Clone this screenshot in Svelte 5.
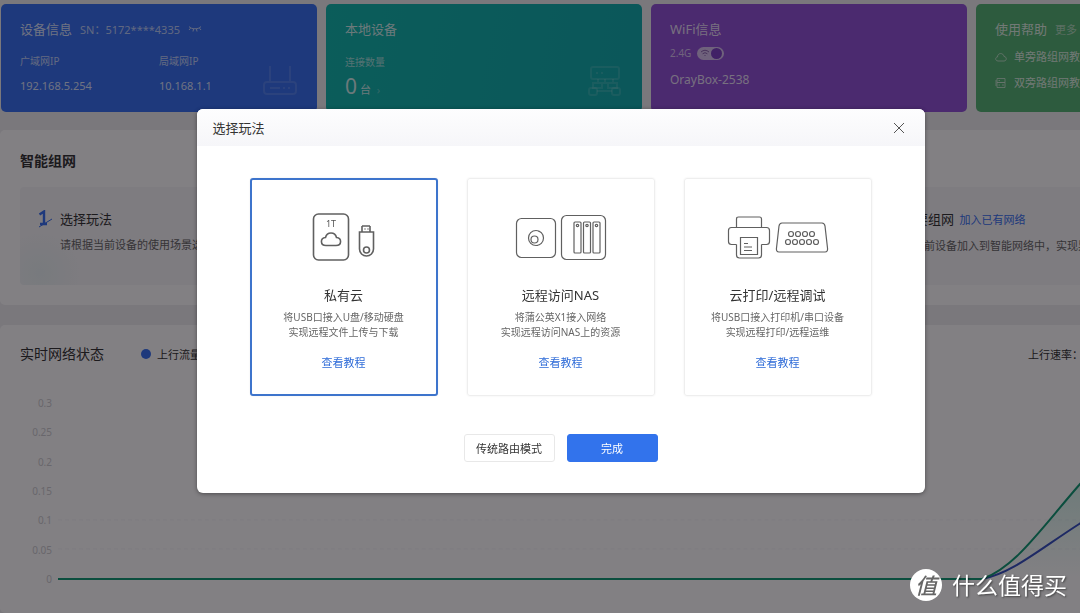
<script>
  // ── Modal options ──────────────────────────────────────────────────────────
  const modes = [
    {
      id: 'cloud',
      title: '私有云',
      desc: ['将USB口接入U盘/移动硬盘', '实现远程文件上传与下载'],
    },
    {
      id: 'nas',
      title: '远程访问NAS',
      desc: ['将蒲公英X1接入网络', '实现远程访问NAS上的资源'],
    },
    {
      id: 'print',
      title: '云打印/远程调试',
      desc: ['将USB口接入打印机/串口设备', '实现远程打印/远程运维'],
    },
  ]

  // ── Chart ──────────────────────────────────────────────────────────────────
  const ticks = ['0.3', '0.25', '0.2', '0.15', '0.1', '0.05', '0']

  let selected = $state('cloud')
  let wifiOn = $state(true)
  let open = $state(true)
</script>

<div class="page">
  <section class="cards">
    <div class="card blue">
      <div class="card-head">
        <h2>设备信息</h2>
        <span class="sn">SN：5172****4335</span>
        <svg class="eye" width="14" height="8" viewBox="0 0 14 8">
          <path d="M1 1.5C3 4.500 11 4.500 13 1.500M2.500 3.200L1 5M5.500 4L5 6.500M8.500 4L9 6.500M11.500 3.200L13 5" />
        </svg>
      </div>
      <dl class="ips">
        <div><dt>广域网IP</dt><dd>192.168.5.254</dd></div>
        <div><dt>局域网IP</dt><dd>10.168.1.1</dd></div>
      </dl>
      <svg class="deco" width="36" height="32" viewBox="0 0 36 32">
        <path d="M8 1V16M28 1V16" />
        <rect x="2" y="17" width="32" height="12" rx="3" />
        <path d="M8 23H18M21 23H23M26 23H28" />
      </svg>
    </div>

    <div class="card teal">
      <h2>本地设备</h2>
      <p class="label">连接数量</p>
      <p class="count"><b>0</b> 台 <i>›</i></p>
      <svg class="deco" width="36" height="32" viewBox="0 0 36 32">
        <rect x="4" y="2" width="28" height="12" rx="2" />
        <path d="M9 8H11M14 8H16M11 14V18H26V14M18 14V18M6 18H15V23H6ZM21 18H30V23H21Z" />
        <rect x="2" y="23" width="8" height="7" rx="2" />
        <rect x="25" y="23" width="8" height="7" rx="2" />
        <path d="M10 26H25" />
      </svg>
    </div>

    <div class="card purple">
      <h2>WiFi信息</h2>
      <label class="wifi">
        2.4G
        <span class="switch">
          <input type="checkbox" bind:checked={wifiOn} />
          <svg width="10" height="8" viewBox="0 0 10 8">
            <path d="M1 3Q5 -.5 9 3M2.600 4.800Q5 2.600 7.400 4.800M4.500 6.500H5.500" />
          </svg>
        </span>
      </label>
      <p class="ssid">OrayBox-2538</p>
    </div>

    <div class="card green">
      <div class="card-head">
        <h2>使用帮助</h2>
        <a class="more" href="#more">更多</a>
      </div>
      <ul class="help">
        <li>
          <svg width="12" height="12" viewBox="0 0 12 12">
            <path d="M3 10C0 10 0 6 2.500 6C2.500 1.500 8.500 1.500 9 5.500C12 5.500 12 10 9 10Z" />
          </svg>
          <a href="#single">单旁路组网教程</a>
        </li>
        <li>
          <svg width="12" height="12" viewBox="0 0 12 12">
            <path d="M2 1.500H10V5.500H2ZM2 5.500H10V10.500H2ZM3.500 3.500H5M3.500 8H5M1 3V9M7 8H9" />
          </svg>
          <a href="#double">双旁路组网教程</a>
        </li>
      </ul>
    </div>
  </section>

  <section class="panel network">
    <h3>智能组网</h3>
    <div class="steps">
      <div class="step first">
        <svg class="num" width="18" height="18" viewBox="0 0 18 18">
          <path class="one" d="M3.500 4.500L8 1.500V14M4 14H11" />
          <path class="slash" d="M3 17L16 9" />
        </svg>
        <div>
          <h4>选择玩法</h4>
          <p>请根据当前设备的使用场景选择玩法</p>
        </div>
      </div>
      <div class="step last">
        <div>
          <h4>需要组网 <a href="#join">加入已有网络</a></h4>
          <p>将当前设备加入到智能网络中，实现异地组网互联</p>
        </div>
      </div>
    </div>
  </section>

  <section class="panel traffic">
    <div class="traffic-head">
      <h3>实时网络状态</h3>
      <span class="legend">上行流量</span>
      <span class="rate">上行速率：0.00 KB/s</span>
    </div>
    <div class="chart">
      <ol>
        {#each ticks as tick}
          <li>{tick}</li>
        {/each}
      </ol>
      <svg viewBox="0 0 1214 180" preserveAspectRatio="none">
        <defs>
          <linearGradient id="area" x1="0" y1="0" x2="0" y2="1">
            <stop offset="0" stop-color="#2fc99a" stop-opacity=".35" />
            <stop offset="1" stop-color="#2fc99a" stop-opacity="0" />
          </linearGradient>
        </defs>
        <path class="grid" d="M0 117H1214M0 146H1214" />
        <path fill="url(#area)" d="M928 176C958 164 982 128 1022 82L1090 0H1214V176Z" />
        <path class="down" d="M0 176H925C955 170 980 148 1022 121L1214 0" />
        <path class="up" d="M0 176H925C958 164 982 128 1022 82L1090 0" />
      </svg>
    </div>
  </section>
</div>

{#if open}
  <div class="mask">
    <div class="modal" role="dialog" aria-labelledby="modal-title">
      <header>
        <h2 id="modal-title">选择玩法</h2>
        <button class="close" aria-label="关闭" onclick={() => (open = false)}>
          <svg width="12" height="12" viewBox="0 0 12 12"><path d="M1 1L11 11M11 1L1 11" /></svg>
        </button>
      </header>

      <div class="options">
        {#each modes as mode}
          <div class="option" class:active={selected === mode.id}>
            <label>
              <input type="radio" name="mode" value={mode.id} bind:group={selected} />
              {#if mode.id === 'cloud'}
                <svg class="art" width="120" height="56" viewBox="0 0 120 56">
                  <rect x="29.500" y="5" width="35" height="46" rx="5" />
                  <text x="47" y="18" text-anchor="middle">1T</text>
                  <path d="M42 36.500C36 36.500 36 29 41.500 28.500C43 22.500 51 22.500 52.500 28.500C58 29 58 36.500 52 36.500Z" />
                  <path d="M78 17V23M86 17V23M78 17H86M75.500 23H89.500V40A7 7 0 0 1 75.500 40Z" />
                  <path d="M80.500 20H81.500M83.500 20H84.500" />
                  <circle cx="82.500" cy="41" r="3" />
                </svg>
              {:else if mode.id === 'nas'}
                <svg class="art thin" width="120" height="56" viewBox="0 0 120 56">
                  <rect x="15.500" y="9.500" width="39" height="39" rx="5" />
                  <circle cx="35" cy="29" r="7.500" />
                  <circle cx="33.500" cy="30.500" r="3.500" />
                  <rect x="60.500" y="6.500" width="44" height="44" rx="5" />
                  {#each [73, 82.5, 92] as x}
                    <rect x={x} y="13" width="7" height="31" rx="1" />
                    <circle cx={x + 3.5} cy="16.500" r="1.200" />
                  {/each}
                </svg>
              {:else}
                <svg class="art thin" width="120" height="56" viewBox="0 0 120 56">
                  <path d="M18.500 18V10Q18.500 8 20.500 8H41.500Q43.500 8 43.500 10V18" />
                  <path d="M18.500 35.500H13.500Q10.500 35.500 10.500 32.500V21.500Q10.500 18.500 13.500 18.500H48.500Q51.500 18.500 51.500 21.500V32.500Q51.500 35.500 48.500 35.500H43.500" />
                  <path d="M18.500 35.500V46Q18.500 49 21.500 49H40.500Q43.500 49 43.500 46V35.500" />
                  <path d="M22.500 28.500H39.500V45.500H22.500ZM26 34.500H30M26 38H34M26 41.500H34" />
                  <path d="M64 14H104Q106.500 14 107 17L109.500 39Q110 43 107 43H61Q58 43 58.500 39L61 17Q61.500 14 64 14Z" />
                  {#each [73, 80, 87, 94] as x}
                    <circle cx={x} cy="25" r="2.500" />
                  {/each}
                  {#each [70, 77, 84, 91, 98] as x}
                    <circle cx={x} cy="33" r="2.500" />
                  {/each}
                </svg>
              {/if}
              <strong>{mode.title}</strong>
              {#each mode.desc as row}
                <span>{row}</span>
              {/each}
            </label>
            <a href="#guide-{mode.id}">查看教程</a>
          </div>
        {/each}
      </div>

      <footer>
        <button class="btn">传统路由模式</button>
        <button class="btn primary">完成</button>
      </footer>
    </div>
  </div>
{/if}

<div class="watermark">
  <span class="badge">值</span>
  <span>什么值得买</span>
</div>

<style>
  :global(*, *::before, *::after) { box-sizing: border-box; margin: 0; padding: 0; }
  :global(body) {
    background: #eeeef0;
    color: #333;
    font-family: 'Noto Sans', 'Noto Sans CJK SC', sans-serif;
    font-size: 11px;
    overflow: hidden;
  }

  a { text-decoration: none; }
  svg { fill: none; display: block; }
  ul, ol { list-style: none; }

  .page {
    height: 100vh;
    overflow: hidden;
    display: flex;
    flex-direction: column;
  }

  /* ── Top cards ── */
  .cards {
    display: grid;
    grid-template-columns: repeat(4, minmax(316px, 1fr));
    gap: 9px;
    padding: 4px 1px 0;
    flex-shrink: 0;
  }

  .card {
    position: relative;
    border-radius: 5px;
    padding: 15px 19px 12px;
    color: rgba(255, 255, 255, 0.82);
  }

  .card h2 { font-size: 13px; font-weight: 400; line-height: 20px; }
  .blue   { background: #3670f0; }
  .teal   { background: linear-gradient(100deg, #10b8ac, #10acac); }
  .purple { background: #9052d6; }
  .green  { background: #55b474; }

  .card-head { display: flex; align-items: center; gap: 8px; }
  .sn { color: rgba(255, 255, 255, 0.68); }
  .eye { stroke: rgba(255, 255, 255, 0.7); }

  .ips { display: grid; grid-template-columns: 1fr 1fr; margin-top: 13px; }
  .ips dt { font-size: 10px; line-height: 18px; opacity: 0.85; }
  .ips dd { line-height: 16px; margin-top: 8px; }

  .deco {
    position: absolute;
    right: 19px;
    bottom: 15px;
    stroke: rgba(255, 255, 255, 0.13);
    stroke-width: 2;
  }

  .label { font-size: 10px; line-height: 18px; margin-top: 14px; opacity: 0.75; }
  .count { line-height: 20px; margin-top: 5px; }
  .count b { font-size: 21px; font-weight: 400; }
  .count i { font-style: normal; margin-left: 3px; opacity: 0.4; }

  .wifi { display: flex; align-items: center; gap: 6px; font-size: 10px; line-height: 18px; margin-top: 5px; color: rgba(255, 255, 255, 0.68); }
  .switch { position: relative; }
  .switch input {
    appearance: none;
    display: block;
    width: 27px;
    height: 13px;
    border-radius: 7px;
    background: rgba(255, 255, 255, 0.65);
  }
  .switch input::after {
    content: '';
    display: block;
    width: 11px;
    height: 11px;
    margin: 1px;
    border-radius: 50%;
    background: #7c40c4;
  }
  .switch input:checked { padding: 1px 0; }
  .switch input:checked::after { margin: 0 0 0 14px; }
  .switch svg { position: absolute; left: 3px; top: 2px; stroke: #8a64ae; }
  .ssid { font-size: 12px; line-height: 18px; margin-top: 9px; }

  .more { color: rgba(255, 255, 255, 0.55); }
  .help { display: flex; flex-direction: column; gap: 8px; margin-top: 9px; }
  .help li { display: flex; align-items: center; gap: 7px; line-height: 18px; }
  .help a { color: inherit; white-space: nowrap; }
  .help svg { stroke: currentColor; opacity: 0.7; flex-shrink: 0; }

  /* ── Panels ── */
  .panel {
    background: #fff;
    min-width: 1291px;
    border-radius: 5px;
    padding: 0 20px;
    flex-shrink: 0;
  }

  .panel h3 { font-size: 14px; line-height: 22px; }
  .network { margin-top: 18px; padding-top: 20px; padding-bottom: 20px; }

  .steps {
    display: grid;
    grid-template-columns: repeat(3, 1fr);
    gap: 12px;
    margin-top: 15px;
  }

  .step {
    display: flex;
    background: #f6f6f8;
    border-radius: 4px;
    height: 98px;
    padding: 21px 0 0 40px;
  }
  .step.first { background: radial-gradient(circle at 20px 86px, #eaf3f4, #f6f6f8 40px); }

  .step .num { margin: 2px 6px 0 -24px; flex-shrink: 0; }
  .last { grid-column: 3; }
  .one { stroke: #3670f0; stroke-width: 2.4; }
  .slash { stroke: #3670f0; }
  .step h4 { font-size: 13px; font-weight: 400; line-height: 22px; white-space: nowrap; }
  .step h4 a { font-size: 11px; color: #3670f0; margin-left: 2px; }
  .step p { line-height: 18px; margin-top: 6px; color: #666; white-space: nowrap; }

  .traffic { margin-top: 20px; padding-top: 18px; flex: 1; }
  .traffic-head { display: flex; align-items: center; }
  .traffic h3 { font-weight: 400; }
  .legend { display: flex; align-items: center; gap: 6px; margin-left: 37px; }
  .legend::before { content: ''; width: 10px; height: 10px; border-radius: 50%; background: #3670f0; }
  .rate { margin-left: auto; width: 243px; white-space: nowrap; }

  .chart { display: flex; gap: 6px; margin-top: 30px; }
  .chart ol {
    width: 32px;
    height: 192px;
    display: flex;
    flex-direction: column;
    justify-content: space-between;
    text-align: right;
    font-size: 10px;
    line-height: 16px;
    color: #ccccd0;
  }
  .chart svg { flex: 1; height: 180px; margin-top: 8px; }
  .grid { stroke: #f4f4f8; stroke-dasharray: 4 3; }
  .up { stroke: #109a74; stroke-width: 2; }
  .down { stroke: #3450c0; stroke-width: 2; }

  /* ── Modal ── */
  .mask {
    position: fixed;
    inset: 0;
    background: rgba(6, 2, 8, 0.5);
    display: flex;
    justify-content: center;
    align-items: flex-start;
    padding: 109px 0 0 41px;
  }

  .modal {
    background: #fff;
    border-radius: 6px;
    overflow: hidden;
    box-shadow: 0 1px 4px rgba(0, 0, 0, 0.4);
  }

  .modal header {
    display: flex;
    align-items: center;
    justify-content: space-between;
    height: 37px;
    padding: 0 16px;
    background: linear-gradient(#fdfdfe, #f6f6f9);
  }
  .modal h2 { font-size: 13px; font-weight: 400; }
  .close { border: 0; background: none; padding: 4px; cursor: pointer; }
  .close svg { stroke: #555; }

  .options { display: flex; gap: 29px; padding: 32px 53px 0; }
  .option {
    width: 188px;
    border: 1px solid #eee;
    border-radius: 3px;
    box-shadow: 0 0 2px rgba(0, 0, 0, 0.08);
    padding: 30px 0 23px;
    text-align: center;
  }
  .option.active { border: 2px solid #3d74cc; padding: 29px 0 22px; }
  .option label { display: flex; flex-direction: column; align-items: center; cursor: pointer; }
  .option input { appearance: none; position: absolute; }
  .option strong { font-size: 13px; font-weight: 400; line-height: 20px; margin: 20px 0 5px; }
  .option span { font-size: 10px; line-height: 15px; color: #666; }
  .option a { display: block; margin-top: 14px; line-height: 18px; color: #2f6cd8; }

  .art { stroke: #606060; stroke-width: 1.6; }
  .thin { stroke-width: 1.2; }
  .art text { fill: #555; stroke: none; font-size: 9px; }

  footer { display: flex; justify-content: center; gap: 12px; padding: 38px 0 31px; }
  .btn {
    min-width: 91px;
    height: 28px;
    border: 1px solid #e8e8e8;
    border-radius: 3px;
    background: #fff;
    color: #333;
    font-family: inherit;
    font-size: 11px;
    cursor: pointer;
  }
  .primary { background: #3273ec; border-color: #3273ec; color: #fff; }

  /* ── Watermark ── */
  .watermark {
    position: fixed;
    right: 13px;
    bottom: 10px;
    display: flex;
    align-items: center;
    gap: 10px;
    color: #fff;
    font-size: 23px;
    line-height: 36px;
    text-shadow: 1px 1px 2px rgba(0, 0, 0, 0.5);
  }
  .badge {
    width: 32px;
    height: 32px;
    border-radius: 50%;
    background: #fff;
    color: #666;
    font-size: 22px;
    font-style: italic;
    font-weight: 500;
    line-height: 32px;
    text-align: center;
    text-shadow: none;
  }
</style>
